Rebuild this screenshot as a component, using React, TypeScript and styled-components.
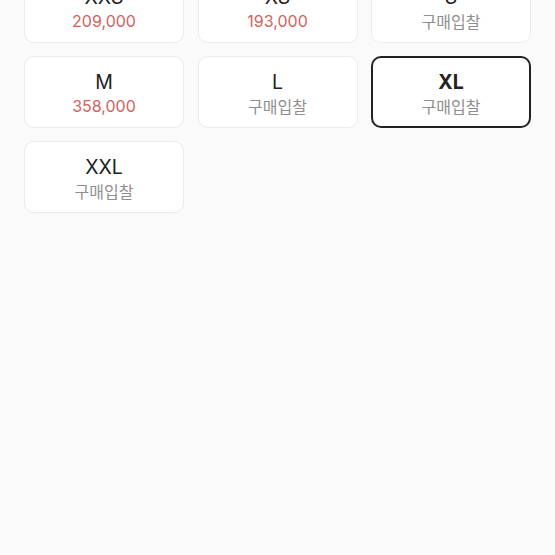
import React from "react";
import styled, { createGlobalStyle } from "styled-components";

const Global = createGlobalStyle`
  html, body { margin: 0; padding: 0; background: #fafafa; }
  body { font-family: Inter, "Noto Sans CJK KR", "Noto Sans", sans-serif; overflow: hidden; }
`;

const Page = styled.div`
  width: 555px;
  height: 555px;
  background: #fafafa;
  overflow: hidden;
`;

const Grid = styled.div`
  display: grid;
  grid-template-columns: repeat(3, 160px);
  grid-auto-rows: 72px;
  column-gap: 13.5px;
  row-gap: 13px;
  margin: -29px 0 0 24px;
`;

const Card = styled.div<{ $selected?: boolean }>`
  box-sizing: border-box;
  background: #fff;
  border-radius: 10px;
  border: ${(p) => (p.$selected ? "2px solid #222" : "1px solid #ebebeb")};
  display: flex;
  flex-direction: column;
  align-items: center;
  padding-top: ${(p) => (p.$selected ? "12px" : "13px")};
`;

const Size = styled.div<{ $selected?: boolean }>`
  font-size: 19.5px;
  line-height: 24px;
  color: #222;
  font-weight: ${(p) => (p.$selected ? 700 : 400)};
`;

const Price = styled.div<{ $bid?: boolean }>`
  font-size: 16px;
  line-height: 22px;
  margin-top: 1px;
  color: ${(p) => (p.$bid ? "#8e8e8e" : "#d2625e")};
  font-family: ${(p) => (p.$bid ? `"Noto Sans CJK KR", sans-serif` : `Inter, "Noto Sans", sans-serif`)};
`;

const items = [
  { size: "XXS", price: "209,000" },
  { size: "XS", price: "193,000" },
  { size: "S", price: null },
  { size: "M", price: "358,000" },
  { size: "L", price: null },
  { size: "XL", price: null, selected: true },
  { size: "XXL", price: null },
];

export default function App() {
  return (
    <Page>
      <Global />
      <Grid>
        {items.map((it) => (
          <Card key={it.size} $selected={it.selected}>
            <Size $selected={it.selected}>{it.size}</Size>
            <Price $bid={!it.price}>{it.price ?? "구매입찰"}</Price>
          </Card>
        ))}
      </Grid>
    </Page>
  );
}
